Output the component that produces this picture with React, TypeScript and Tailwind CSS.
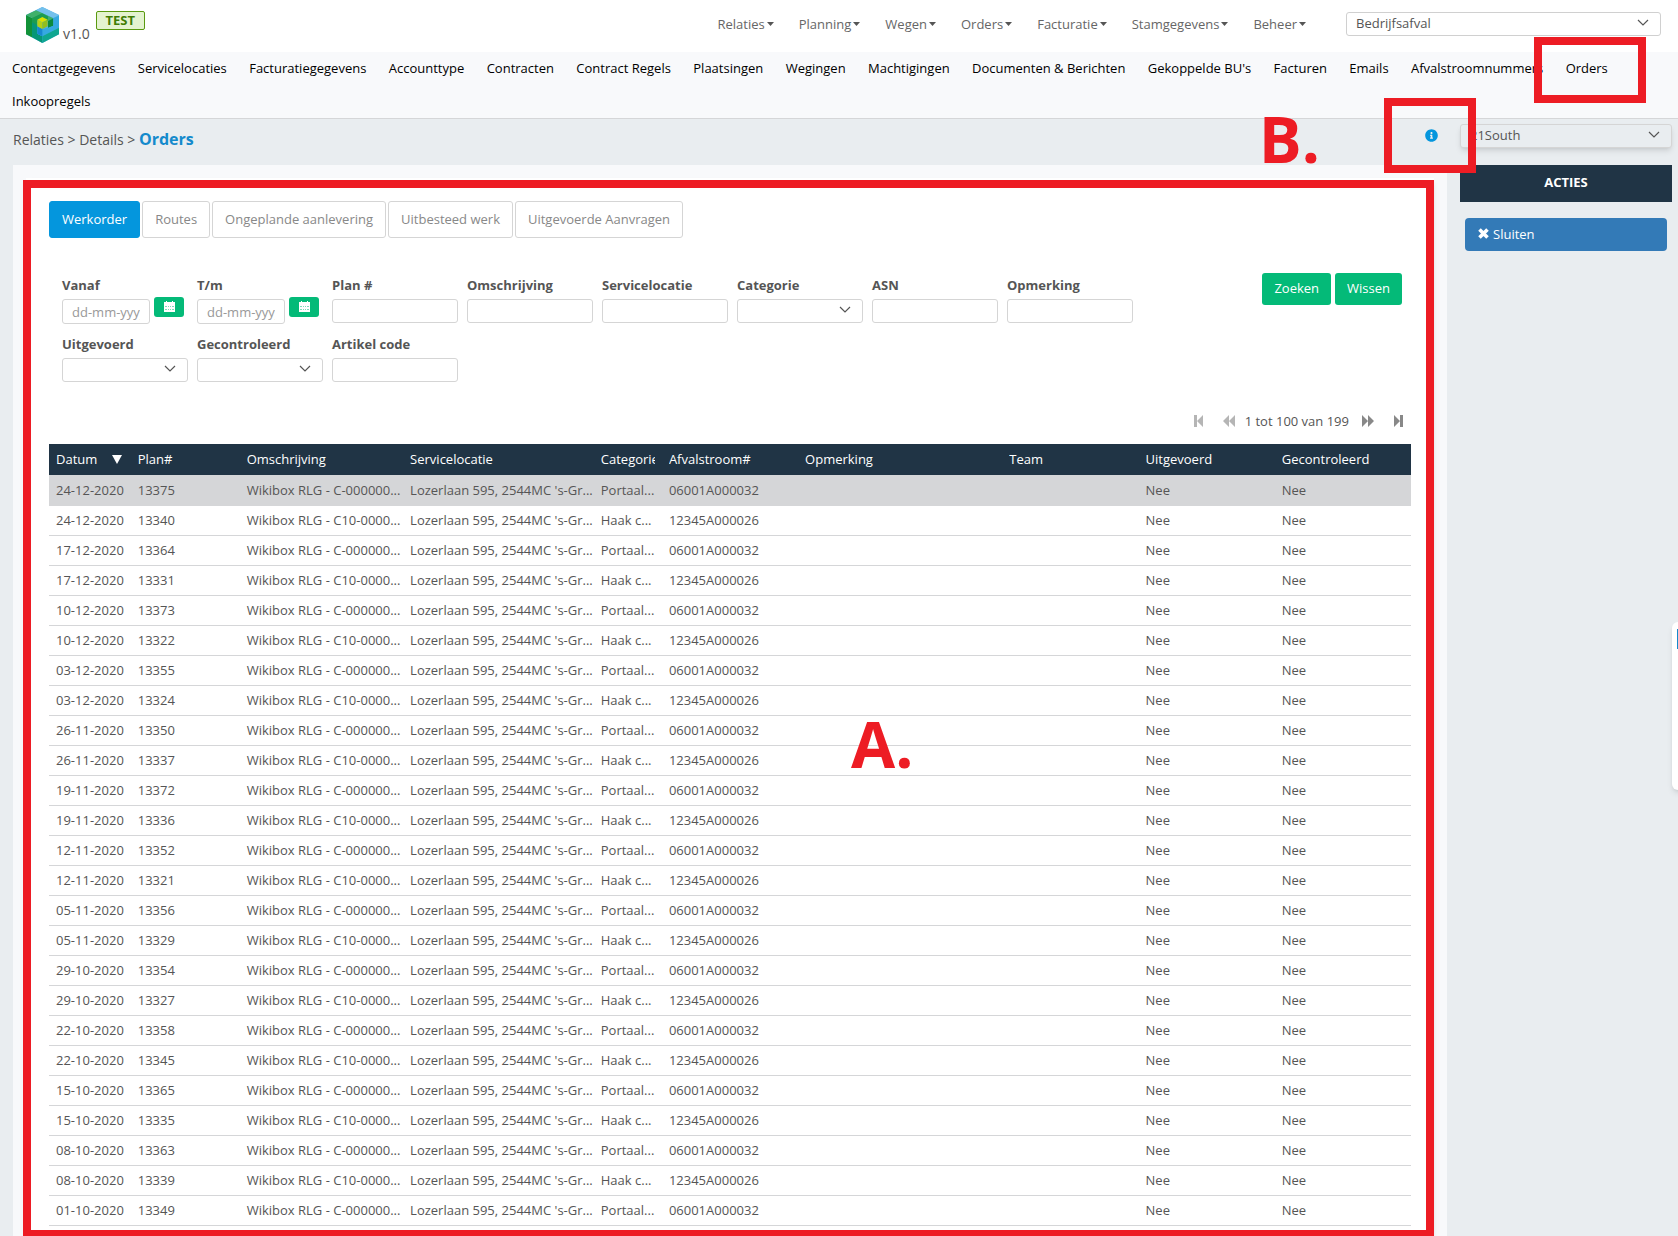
import React, { useState } from 'react';
import { FaInfoCircle } from 'react-icons/fa';

const MENU = ['Relaties', 'Planning', 'Wegen', 'Orders', 'Facturatie', 'Stamgegevens', 'Beheer'];

const SUBMENU = [
  'Contactgegevens', 'Servicelocaties', 'Facturatiegegevens', 'Accounttype', 'Contracten', 'Contract Regels',
  'Plaatsingen', 'Wegingen', 'Machtigingen', 'Documenten & Berichten', "Gekoppelde BU's", 'Facturen', 'Emails',
  'Afvalstroomnummers', 'Orders', 'Inkoopregels',
];

const TABS = ['Werkorder', 'Routes', 'Ongeplande aanlevering', 'Uitbesteed werk', 'Uitgevoerde Aanvragen'];

type FilterType = 'date' | 'text' | 'select';

const FILTERS: { id: string; label: string; type: FilterType }[] = [
  { id: 'from', label: 'Vanaf', type: 'date' },
  { id: 'until', label: 'T/m', type: 'date' },
  { id: 'plan', label: 'Plan #', type: 'text' },
  { id: 'description', label: 'Omschrijving', type: 'text' },
  { id: 'location', label: 'Servicelocatie', type: 'text' },
  { id: 'category', label: 'Categorie', type: 'select' },
  { id: 'asn', label: 'ASN', type: 'text' },
  { id: 'remark', label: 'Opmerking', type: 'text' },
  { id: 'executed', label: 'Uitgevoerd', type: 'select' },
  { id: 'checked', label: 'Gecontroleerd', type: 'select' },
  { id: 'article', label: 'Artikel code', type: 'text' },
];

const COLUMNS = [
  { title: 'Datum', width: 'w-[6%]' },
  { title: 'Plan#', width: 'w-[8%]' },
  { title: 'Omschrijving', width: 'w-[12%]' },
  { title: 'Servicelocatie', width: 'w-[14%]' },
  { title: 'Categorie', width: 'w-[5%]' },
  { title: 'Afvalstroom#', width: 'w-[10%]' },
  { title: 'Opmerking', width: 'w-[15%]' },
  { title: 'Team', width: 'w-[10%]' },
  { title: 'Uitgevoerd', width: 'w-[10%]' },
  { title: 'Gecontroleerd', width: 'w-[10%]' },
];

const PLANS: [string, string][] = [
  ['24-12-2020', '13375'], ['24-12-2020', '13340'],
  ['17-12-2020', '13364'], ['17-12-2020', '13331'],
  ['10-12-2020', '13373'], ['10-12-2020', '13322'],
  ['03-12-2020', '13355'], ['03-12-2020', '13324'],
  ['26-11-2020', '13350'], ['26-11-2020', '13337'],
  ['19-11-2020', '13372'], ['19-11-2020', '13336'],
  ['12-11-2020', '13352'], ['12-11-2020', '13321'],
  ['05-11-2020', '13356'], ['05-11-2020', '13329'],
  ['29-10-2020', '13354'], ['29-10-2020', '13327'],
  ['22-10-2020', '13358'], ['22-10-2020', '13345'],
  ['15-10-2020', '13365'], ['15-10-2020', '13335'],
  ['08-10-2020', '13363'], ['08-10-2020', '13339'],
  ['01-10-2020', '13349'],
];

// The two service containers alternate for every date
const ROWS = PLANS.map(([date, plan], i) => [
  date,
  plan,
  i % 2 === 0 ? 'Wikibox RLG - C-000000...' : 'Wikibox RLG - C10-0000...',
  "Lozerlaan 595, 2544MC 's-Gr...",
  i % 2 === 0 ? 'Portaal...' : 'Haak c...',
  i % 2 === 0 ? '06001A000032' : '12345A000026',
  '',
  '',
  'Nee',
  'Nee',
]);

const Logo = () => (
  <svg width="33" height="36" viewBox="0 0 99 108" aria-hidden="true">
    <polygon points="49,0 99,24 99,82 49,108 0,82 0,24" fill="#4fb2e6" />
    <polygon points="49,0 99,24 82,33 30,10" fill="#74c0ec" />
    <polygon points="0,24 18,33 18,91 0,82" fill="#129238" />
    <polygon points="0,24 30,10 82,34 66,42 48,33 18,47 18,33" fill="#3fb06a" />
    <polygon points="18,33 48,19 66,28 66,42 48,33 34,41 34,80 18,72" fill="#1c9c50" />
    <polygon points="66,42 82,34 82,56 66,64" fill="#0b8a3e" />
    <polygon points="18,46 34,54 34,80 49,88 49,108 18,91" fill="#069677" />
    <polygon points="82,34 99,26 99,62 49,88 34,80 34,58 49,66 66,62 82,56" fill="#35a9e1" />
    <polygon points="34,58 49,66 49,88 34,80" fill="#1787cf" />
    <polygon points="49,88 99,62 99,82 49,108" fill="#0fa690" />
    <polygon points="49,30 65,38 49,46 34,38" fill="#dbe000" />
    <polygon points="34,38 49,46 49,66 34,58" fill="#b4d015" />
    <polygon points="65,38 49,46 49,66 65,58" fill="#92be1e" />
  </svg>
);

const Chevron = () => (
  <svg width="12" height="7" viewBox="0 0 12 7" className="absolute right-3 top-[7px] pointer-events-none" aria-hidden="true">
    <path d="M1 1l5 5 5-5" fill="none" stroke="#555" strokeWidth="1.2" />
  </svg>
);

const CalendarIcon = () => (
  <svg width="11" height="11" viewBox="0 0 11 11" aria-hidden="true">
    <path d="M0 1h2V0h1v1h5V0h1v1h2v10H0z" fill="#fff" />
    <path d="M1 5h2v1H1zM4 5h1v1H4zM6 5h1v1H6zM8 5h2v1H8zM1 8h2v1H1zM4 8h1v1H4zM6 8h1v1H6zM8 8h2v1H8z" fill="#7fdcb9" />
  </svg>
);

const FilterField = ({ id, label, type }: { id: string; label: string; type: FilterType }) => (
  <div className="w-[126px]">
    <label htmlFor={id} className="block mb-[5px] font-bold leading-[18px]">{label}</label>
    {type === 'text' && (
      <input id={id} type="text" className="block w-full h-6 px-2 bg-white border border-[#d5d5d5] rounded-[3px]" />
    )}
    {type === 'select' && (
      <div className="relative">
        <select id={id} className="block w-full h-6 px-2 bg-white border border-[#d5d5d5] rounded-[3px] appearance-none">
          <option></option>
          <option>Ja</option>
          <option>Nee</option>
        </select>
        <Chevron />
      </div>
    )}
    {type === 'date' && (
      <div className="flex items-start gap-1">
        <input id={id} type="text" placeholder="dd-mm-yyyy" className="block w-[88px] h-[25px] px-[9px] bg-white border border-[#d5d5d5] rounded-[3px] placeholder:text-[#999]" />
        <button type="button" aria-label={`${label} kalender`} className="flex items-center justify-center w-[30px] h-5 -mt-0.5 pb-0.5 rounded-[3px] bg-[#04ba78]">
          <CalendarIcon />
        </button>
      </div>
    )}
  </div>
);

const PagerButton = ({ label, path, width, disabled }: { label: string; path: string; width: number; disabled?: boolean }) => (
  <button type="button" aria-label={label} disabled={disabled} className={disabled ? 'text-[#b5b5b5]' : 'text-[#888]'}>
    <svg width={width} height="12" viewBox={`0 0 ${width} 12`} fill="currentColor" aria-hidden="true"><path d={path} /></svg>
  </button>
);

const App = () => {
  const [tab, setTab] = useState('Werkorder');
  const [selected, setSelected] = useState(0);

  return (
    <div className="relative flex flex-col h-screen overflow-hidden bg-[#e9edf0] text-[13px] leading-[18px] text-[#555] font-['Open_Sans',sans-serif]">
      <header className="flex items-start justify-between h-[52px] pl-[26px] pr-[17px] bg-white shrink-0">
        <div className="flex items-start">
          <div className="pt-[7px]"><Logo /></div>
          <span className="ml-1 pt-[25px] text-sm leading-[18px]">v1.0</span>
          <span className="ml-1.5 mt-[11px] w-[49px] h-[19px] border border-[#5a9a10] rounded-[2px] bg-[#e4f3d0] text-center font-bold leading-[17px] text-[#417d05]">TEST</span>
        </div>
        <div className="flex items-start gap-10">
          <nav className="flex gap-[25px] pt-[15px]">
            {MENU.map((item) => (
              <a key={item} href="#" className="flex items-center gap-0.5 text-[#666]">
                {item}
                <svg width="7" height="4" viewBox="0 0 7 4" aria-hidden="true"><path d="M0 0h7L3.500 4z" fill="#555" /></svg>
              </a>
            ))}
          </nav>
          <div className="relative mt-3 w-[315px]">
            <select aria-label="Business unit" className="block w-full h-6 px-[9px] pb-0.5 bg-white border border-[#d0d0d0] rounded-[3px] appearance-none">
              <option>Bedrijfsafval</option>
            </select>
            <Chevron />
          </div>
        </div>
      </header>

      <nav className="flex flex-wrap justify-between gap-x-4 pl-3 pr-[70px] h-[67px] bg-[#f8f9fb] border-b border-[#d5d6d8] text-black shrink-0">
        {SUBMENU.map((item) => (
          <a key={item} href="#" className="relative block leading-[33px]">
            {item}
            {item === 'Orders' && <span className="absolute -right-[38px] -top-[15px] w-[112px] h-[66px] border-8 border-[#ed1c24] z-20"></span>}
          </a>
        ))}
      </nav>

      <div className="flex flex-1 min-h-0 gap-[13px] pl-[13px] pr-1.5">
        <div className="flex flex-col flex-1 min-w-0">
          <div className="flex justify-between h-[46px] shrink-0">
            <div className="pt-[9px] text-sm leading-[22px]">
              <a href="#">Relaties</a> &gt; <a href="#">Details</a> &gt; <span className="text-base leading-[22px] font-bold text-[#148acc]">Orders</span>
            </div>
            <button type="button" aria-label="Informatie" className="relative self-start mt-2.5 mr-[9px] text-[#0496dd]">
              <FaInfoCircle size={13} />
              <span className="absolute -left-[41px] -top-[31px] w-[92px] h-[75px] border-8 border-[#ed1c24] z-20"></span>
              <span className="absolute right-[118px] -top-[34px] text-[64px] leading-[88px] font-bold text-[#ed1c24]">B.</span>
            </button>
          </div>

          <main className="relative flex-1 min-h-0 pt-[13px] px-[13px] bg-[#f8f9fb]">
            <div className="absolute left-2.5 right-[13px] top-[15px] -bottom-0.5 border-8 border-[#ed1c24] z-10 pointer-events-none"></div>
            <div className="h-full px-[23px] pt-[23px] bg-white shadow-md">
              <div className="flex gap-0.5">
                {TABS.map((name) => (
                  <button
                    key={name}
                    type="button"
                    onClick={() => setTab(name)}
                    className={`h-[37px] px-3 pb-0.5 border rounded-[3px] ${name === tab ? 'bg-[#0496dd] border-[#0496dd] text-white font-medium' : 'bg-white border-[#d5d5d5] text-[#888]'}`}
                  >
                    {name}
                  </button>
                ))}
              </div>

              <form className="flex items-start pl-[13px] pr-[9px] mt-[35px]" onSubmit={(e) => e.preventDefault()}>
                <div className="flex flex-wrap flex-1 gap-x-[9px] gap-y-[11px] pt-[3px]">
                  {FILTERS.map((f) => <FilterField key={f.id} {...f} />)}
                </div>
                <div className="flex gap-1">
                  <button type="submit" className="h-8 px-3 pb-0.5 rounded-[3px] bg-[#04ba78] text-white">Zoeken</button>
                  <button type="reset" className="h-8 px-3 pb-0.5 rounded-[3px] bg-[#04ba78] text-white">Wissen</button>
                </div>
              </form>

              <div className="flex items-center justify-end h-[18px] mt-[30px] mb-3.5 pr-2">
                <PagerButton label="Eerste" width={9} path="M0 0h3v12H0zM9 0v12L3 6z" disabled />
                <span className="w-5"></span>
                <PagerButton label="Vorige" width={12} path="M6 0v12L0 6zM12 0v12L6 6z" disabled />
                <span className="ml-2.5 mr-[13px]">1 tot 100 van 199</span>
                <PagerButton label="Volgende" width={12} path="M0 0v12l6-6zM6 0v12l6-6z" />
                <span className="w-5"></span>
                <PagerButton label="Laatste" width={9} path="M6 0h3v12H6zM0 0v12l6-6z" />
              </div>

              <table className="w-full table-fixed border-separate border-spacing-0">
                <thead>
                  <tr className="h-[31px] bg-[#203445] text-white">
                    {COLUMNS.map((col) => (
                      <th key={col.title} className={`${col.width} px-[7px] pt-1.5 align-top text-left font-normal whitespace-nowrap`}>
                        <div className="flex items-center justify-between overflow-hidden">
                          {col.title}
                          {col.title === 'Datum' && (
                            <svg width="10" height="9" viewBox="0 0 10 9" className="mr-0.5 shrink-0" aria-hidden="true"><path d="M0 0h10L5 9z" fill="#fff" /></svg>
                          )}
                        </div>
                      </th>
                    ))}
                  </tr>
                </thead>
                <tbody>
                  {ROWS.map((row, i) => (
                    <tr key={row[1]} onClick={() => setSelected(i)} className={i === selected ? 'h-[31px] bg-[#d5d6d8]' : 'h-[30px]'}>
                      {row.map((cell, c) => (
                        <td key={c} className={`pl-[7px] align-top border-b border-[#d5d6d8] whitespace-nowrap ${i === selected ? 'pt-1.5' : 'pt-[5px]'}`}>{cell}</td>
                      ))}
                    </tr>
                  ))}
                </tbody>
              </table>
            </div>
            <span className="absolute left-[838px] top-[535px] text-[64px] leading-[88px] font-bold text-[#ed1c24]">A.</span>
          </main>
        </div>

        <aside className="w-[212px] shrink-0">
          <div className="relative mt-[5px]">
            <select aria-label="Relatie" className="block w-full h-6 pl-[9px] pr-8 pb-0.5 bg-[#e9edf0] border border-[#d5d5d5] rounded-[3px] shadow-md appearance-none">
              <option>21South</option>
            </select>
            <Chevron />
          </div>
          <h2 className="mt-[17px] h-[37px] bg-[#203445] text-center font-bold leading-[34px] text-white">ACTIES</h2>
          <div className="px-[5px] mt-4">
            <button type="button" className="flex items-center gap-1 w-full h-[33px] px-[13px] pb-0.5 rounded-[4px] bg-[#337ab7] text-white">
              <svg width="11" height="11" viewBox="0 0 11 11" aria-hidden="true"><path d="M1.500 1.500l8 8M9.500 1.500l-8 8" stroke="#fff" strokeWidth="3.600" /></svg>
              Sluiten
            </button>
          </div>
        </aside>
      </div>

      {/* Feedback tab, mostly outside the window */}
      <div className="absolute -right-2 top-[622px] w-3.5 h-[168px] pt-[7px] pl-[5px] rounded-md bg-white shadow-md">
        <div className="h-5 bg-[#148acc]"></div>
      </div>
    </div>
  );
};

export default App;
